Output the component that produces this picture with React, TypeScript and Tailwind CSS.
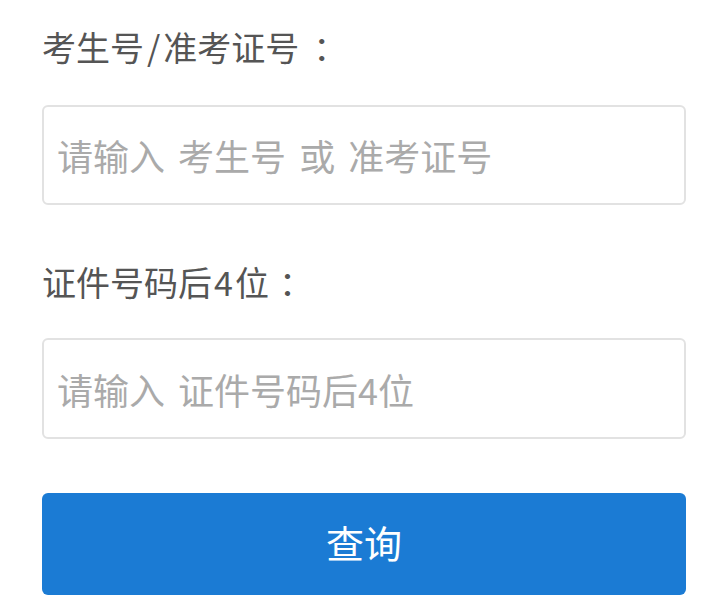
import { useState } from "react";

export default function App() {
  const [examNo, setExamNo] = useState("");
  const [idTail, setIdTail] = useState("");

  return (
    <div className="min-h-screen bg-white pl-[42px] pr-[40px] flex flex-col font-['Noto_Sans_CJK_SC','Noto_Sans',sans-serif]">
      <div className="mt-[27px] h-[40px] leading-[40px] text-[34px] text-[#555] flex">
        <span>考生号</span>
        <span className="mx-[3px]">/</span>
        <span>准考证号</span>
        <span className="ml-[14px]">：</span>
      </div>
      <input
        className="mt-[38px] h-[100px] w-full rounded-[6px] border-2 border-[#e2e2e2] px-[13px] text-[36px] text-[#333] outline-none placeholder:text-[#aaa] placeholder:[word-spacing:5px]"
        placeholder="请输入 考生号 或 准考证号"
        value={examNo}
        onChange={(e) => setExamNo(e.target.value)}
      />

      <div className="mt-[57px] h-[40px] leading-[40px] text-[34px] text-[#555] flex">
        <span>证件号码后</span>
        <span className="mx-[2px]">4</span>
        <span>位</span>
        <span className="ml-[10px]">：</span>
      </div>
      <input
        className="mt-[36px] h-[101px] w-full rounded-[6px] border-2 border-[#e2e2e2] px-[13px] text-[36px] text-[#333] outline-none placeholder:text-[#aaa] placeholder:[word-spacing:5px]"
        placeholder="请输入 证件号码后4位"
        value={idTail}
        onChange={(e) => setIdTail(e.target.value)}
      />

      <button
        className="mt-[54px] h-[102px] w-full rounded-[6px] bg-[#1b7bd4] pb-[6px] text-[38px] text-white"
        type="button"
      >
        查询
      </button>
    </div>
  );
}
